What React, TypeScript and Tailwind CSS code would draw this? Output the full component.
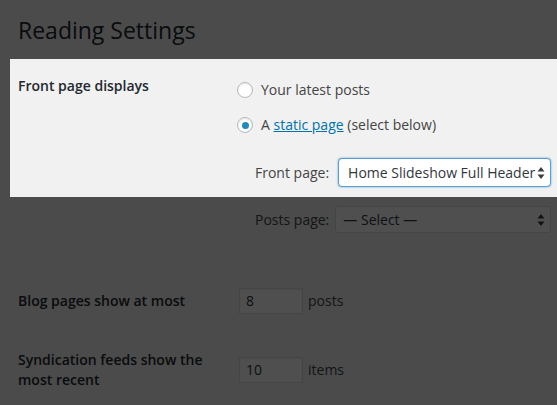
import React from "react";

function SelectArrows() {
  return (
    <svg width="8" height="13" viewBox="0 0 8 13" className="pointer-events-none absolute right-[5px] top-1/2 -translate-y-1/2">
      <path d="M4 0.5 L7.5 5 L0.5 5 Z" fill="#3c3c3c" />
      <path d="M0.5 8 L7.5 8 L4 12.5 Z" fill="#3c3c3c" />
    </svg>
  );
}

function Radio({ checked }: { checked?: boolean }) {
  return (
    <span className="flex h-4 w-4 shrink-0 items-center justify-center rounded-full border border-[#b4b9be] bg-white shadow-[inset_0_1px_2px_rgba(0,0,0,0.1)]">
      {checked && <span className="h-[7px] w-[7px] rounded-full bg-[#1e8cbe]" />}
    </span>
  );
}

function NumberBox({ value, unit }: { value: string; unit: string }) {
  return (
    <div className="ml-[2px] flex items-center">
      <div className="flex h-[26px] w-[64px] items-center border border-[#ddd] bg-white px-[6px] text-[#32373c] shadow-[inset_0_1px_2px_rgba(0,0,0,0.07)]">
        {value}
      </div>
      <span className="ml-[5px] text-[#444]">{unit}</span>
    </div>
  );
}

export default function App() {
  return (
    <div className="relative h-[405px] w-[557px] overflow-hidden bg-[#f1f1f1] font-['Open_Sans','Noto_Sans',sans-serif] text-sm leading-5 text-[#444]">
      <h1 className="pl-[18px] pt-4 text-[23px] font-normal leading-[29px] text-[#23282d]">Reading Settings</h1>

      {/* dimmed backdrop, the highlighted panel sits above it */}
      <div className="pointer-events-none absolute inset-0 z-10 bg-black/[0.69]" />

      <section className="relative z-20 ml-[10px] mt-[14px] flex h-[138px] bg-[#f1f1f1] pl-2">
        <div className="w-[219px] pt-[17px] font-semibold text-[#23282d]">Front page displays</div>
        <div className="flex flex-1 flex-col pr-[6px] pt-[21px]">
          <label className="flex h-5 items-center gap-2">
            <Radio />
            <span>Your latest posts</span>
          </label>
          <label className="mt-[15px] flex h-5 items-center gap-2">
            <Radio checked />
            <span>
              A <a className="text-[#0073aa] underline">static page</a> (select below)
            </span>
          </label>
          <div className="mt-[23px] flex items-center pl-[18px]">
            <span>Front page:</span>
            <div className="relative ml-[9px] flex h-[29px] flex-1 items-center rounded-[4px] border border-[#5b9dd9] bg-white pl-[9px] text-[#32373c] shadow-[0_0_2px_rgba(30,140,190,0.8)]">
              Home Slideshow Full Header
              <SelectArrows />
            </div>
          </div>
        </div>
      </section>

      <div className="mt-[9px] flex pl-[18px] pr-[6px]">
        <div className="w-[219px]" />
        <div className="flex flex-1 items-center pl-[18px]">
          <span>Posts page:</span>
          <div className="relative ml-[6px] flex h-[27px] flex-1 items-center rounded-[3px] border border-[#ddd] bg-white pl-[7px] text-[#32373c]">
            — Select —
            <SelectArrows />
          </div>
        </div>
      </div>

      <div className="mt-[55px] flex items-center pl-[18px]">
        <div className="w-[219px] font-semibold text-[#23282d]">Blog pages show at most</div>
        <NumberBox value="8" unit="posts" />
      </div>

      <div className="mt-[36px] flex items-center pl-[18px]">
        <div className="w-[219px] pr-[29px] font-semibold text-[#23282d]">Syndication feeds show the most recent</div>
        <NumberBox value="10" unit="items" />
      </div>
    </div>
  );
}
